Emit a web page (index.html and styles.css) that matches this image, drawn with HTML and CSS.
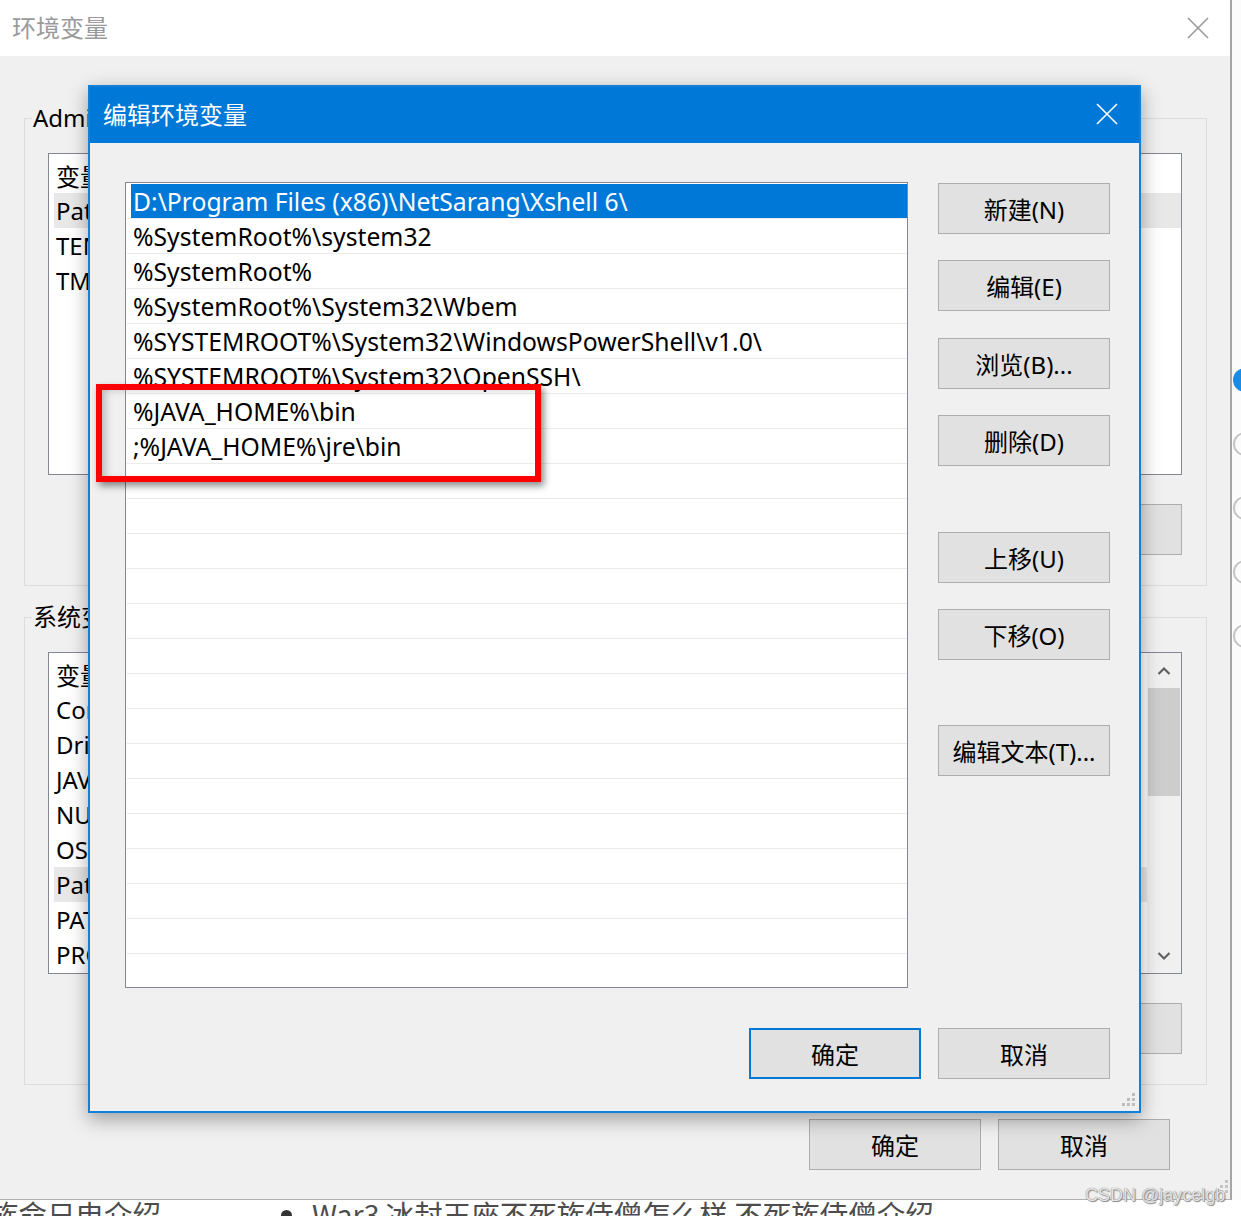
FILE: index.html
```html
<!DOCTYPE html>
<html lang="zh-CN">
<head>
<meta charset="utf-8">
<title>环境变量</title>
<link rel="stylesheet" href="styles.css">
</head>
<body>
<div class="desk">
  <div class="top">
    <div class="win">
      <div class="win-title">
        <span class="win-title-text">环境变量</span>
        <svg class="win-close" width="22" height="22" viewBox="0 0 22 22"><path d="M1 1L21 21M21 1L1 21" stroke="#9a9a9a" stroke-width="1.6" fill="none"/></svg>
      </div>
      <div class="win-body">
        <div class="group">
          <div class="group-label">Administrator 的用户变量(U)</div>
          <div class="lv">
            <div class="lv-content">
              <div class="lv-row"><span class="c1">变量</span><span class="c2">值</span></div>
              <div class="lv-row sel"><span class="c1">Path</span><span class="c2">%USERPROFILE%\AppData\Local\Microsoft\WindowsApps;</span></div>
              <div class="lv-row"><span class="c1">TEMP</span><span class="c2">%USERPROFILE%\AppData\Local\Temp</span></div>
              <div class="lv-row"><span class="c1">TMP</span><span class="c2">%USERPROFILE%\AppData\Local\Temp</span></div>
            </div>
          </div>
          <div class="btns">
            <div class="btn">新建(N)...</div>
            <div class="btn">编辑(E)...</div>
            <div class="btn">删除(D)</div>
          </div>
        </div>
        <div class="group">
          <div class="group-label">系统变量(S)</div>
          <div class="lv">
            <div class="lv-content">
              <div class="lv-row"><span class="c1">变量</span><span class="c2">值</span></div>
              <div class="lv-row"><span class="c1">ComSpec</span><span class="c2">C:\Windows\system32\cmd.exe</span></div>
              <div class="lv-row"><span class="c1">DriverData</span><span class="c2">C:\Windows\System32\Drivers\DriverData</span></div>
              <div class="lv-row"><span class="c1">JAVA_HOME</span><span class="c2">C:\Program Files\Java\jdk1.8.0_201</span></div>
              <div class="lv-row"><span class="c1">NUMBER_OF_PROCESSORS</span><span class="c2">8</span></div>
              <div class="lv-row"><span class="c1">OS</span><span class="c2">Windows_NT</span></div>
              <div class="lv-row sel"><span class="c1">Path</span><span class="c2">C:\Program Files (x86)\Common Files\Oracle\Java</span></div>
              <div class="lv-row"><span class="c1">PATHEXT</span><span class="c2">.COM;.EXE;.BAT;.CMD;.VBS;.VBE;.JS;.JSE</span></div>
              <div class="lv-row"><span class="c1">PROCESSOR_ARCHITECTURE</span><span class="c2">AMD64</span></div>
            </div>
            <div class="sb">
              <div class="sb-btn"><svg width="14" height="10" viewBox="0 0 14 10"><path d="M1.5 8L7 2.5L12.5 8" stroke="#606060" stroke-width="2.2" fill="none"/></svg></div>
              <div class="sb-thumb"></div>
              <div class="sb-track"></div>
              <div class="sb-btn"><svg width="14" height="10" viewBox="0 0 14 10"><path d="M1.5 2L7 7.5L12.5 2" stroke="#606060" stroke-width="2.2" fill="none"/></svg></div>
            </div>
          </div>
          <div class="btns">
            <div class="btn">新建(W)...</div>
            <div class="btn">编辑(I)...</div>
            <div class="btn">删除(L)</div>
          </div>
        </div>
        <div class="foot">
          <div class="btn">确定</div>
          <div class="btn">取消</div>
        </div>
      </div>
    </div>
    <div class="behind-right">
      <div class="rad on"></div>
      <div class="rad"></div>
      <div class="rad"></div>
      <div class="rad"></div>
      <div class="rad"></div>
    </div>
  </div>
  <div class="behind-bottom">
    <span class="bb1">族命日电介绍</span>
    <span class="bb-dot"></span>
    <span class="bb2">War3 冰封王座不死族侍僧怎么样 不死族侍僧介绍</span>
  </div>
</div>

<svg class="grip grip-win" width="16" height="16" viewBox="0 0 16 16"><g fill="#c4c4c4"><rect x="12" y="1" width="3" height="3"/><rect x="7" y="6" width="3" height="3"/><rect x="12" y="6" width="3" height="3"/><rect x="2" y="11" width="3" height="3"/><rect x="7" y="11" width="3" height="3"/><rect x="12" y="11" width="3" height="3"/></g></svg>

<div class="dialog">
  <div class="dlg-title">
    <span>编辑环境变量</span>
    <svg class="dlg-close" width="22" height="22" viewBox="0 0 22 22"><path d="M1 1L21 21M21 1L1 21" stroke="#ffffff" stroke-width="1.6" fill="none"/></svg>
  </div>
  <div class="dlg-body">
    <div class="dlg-main">
      <div class="plist">
        <div class="prow"><span class="sel">D:\Program Files (x86)\NetSarang\Xshell 6\</span></div>
        <div class="prow"><span>%SystemRoot%\system32</span></div>
        <div class="prow"><span>%SystemRoot%</span></div>
        <div class="prow"><span>%SystemRoot%\System32\Wbem</span></div>
        <div class="prow"><span>%SYSTEMROOT%\System32\WindowsPowerShell\v1.0\</span></div>
        <div class="prow"><span>%SYSTEMROOT%\System32\OpenSSH\</span></div>
        <div class="prow"><span>%JAVA_HOME%\bin</span></div>
        <div class="prow"><span>;%JAVA_HOME%\jre\bin</span></div>
        <div class="prow"><span></span></div>
        <div class="prow"><span></span></div>
        <div class="prow"><span></span></div>
        <div class="prow"><span></span></div>
        <div class="prow"><span></span></div>
        <div class="prow"><span></span></div>
        <div class="prow"><span></span></div>
        <div class="prow"><span></span></div>
        <div class="prow"><span></span></div>
        <div class="prow"><span></span></div>
        <div class="prow"><span></span></div>
        <div class="prow"><span></span></div>
        <div class="prow"><span></span></div>
        <div class="prow"><span></span></div>
        <div class="prow"><span></span></div>
      </div>
      <div class="pbtns">
        <div class="btn">新建(N)</div>
        <div class="btn">编辑(E)</div>
        <div class="btn">浏览(B)...</div>
        <div class="btn">删除(D)</div>
        <div class="btn">上移(U)</div>
        <div class="btn">下移(O)</div>
        <div class="btn">编辑文本(T)...</div>
      </div>
    </div>
    <div class="dlg-foot">
      <div class="btn def">确定</div>
      <div class="btn">取消</div>
    </div>
  </div>
  <svg class="grip grip-dlg" width="16" height="16" viewBox="0 0 16 16"><g fill="#bdbdbd"><rect x="12" y="1" width="3" height="3"/><rect x="7" y="6" width="3" height="3"/><rect x="12" y="6" width="3" height="3"/><rect x="2" y="11" width="3" height="3"/><rect x="7" y="11" width="3" height="3"/><rect x="12" y="11" width="3" height="3"/></g></svg>
</div>

<div class="mark"></div>
<div class="wm">CSDN @jaycelgb</div>
</body>
</html>
```

FILE: styles.css
```css
* { box-sizing: border-box; margin: 0; padding: 0; }

body {
  width: 1241px;
  height: 1216px;
  overflow: hidden;
  position: relative;
  background: #ffffff;
  font-family: "Noto Sans", "Noto Sans CJK SC", sans-serif;
  font-size: 24px;
  color: #000;
}

.desk { display: flex; flex-direction: column; height: 1216px; }
.top { display: flex; height: 1200px; }

.win {
  width: 1232px;
  height: 1200px;
  flex: none;
  border-right: 2px solid #a5a5a5;
  border-bottom: 1px solid #b0b0b0;
  background: #f0f0f0;
  display: flex;
  flex-direction: column;
}

.win-title {
  height: 56px;
  background: #ffffff;
  display: flex;
  align-items: center;
  padding: 0 21px 0 12px;
}
.win-title-text { color: #9a9a9a; line-height: 1; }
.win-close { margin-left: auto; }

.win-body { flex: 1; padding: 62px 23px 0 24px; }

.group {
  border: 1px solid #dcdcdc;
  padding: 0 24px 30px 23px;
}
.group + .group { margin-top: 31px; }

.group-label {
  width: max-content;
  height: 34px;
  line-height: 34px;
  margin: -18px 0 0 -16px;
  padding: 0 1px;
  background: #f0f0f0;
  white-space: nowrap;
}

.lv {
  height: 322px;
  margin-top: 18px;
  border: 1px solid #828790;
  background: #fff;
  display: flex;
}
.lv-content { flex: 1; padding: 4px 0 0 5px; overflow: hidden; }
.lv-row {
  height: 35px;
  display: flex;
  align-items: center;
  padding-left: 2px;
  white-space: nowrap;
}
.lv-row.sel { background: #e8e8e8; }
.c1 { width: 340px; flex: none; }
.c2 { width: 600px; flex: none; overflow: hidden; }

.sb { width: 34px; flex: none; background: #f0f0f0; display: flex; flex-direction: column; }
.sb-btn { height: 35px; display: flex; align-items: center; justify-content: center; }
.sb-thumb { height: 108px; margin: 0 1px; background: #cdcdcd; }
.sb-track { flex: 1; }

.btns { display: flex; justify-content: flex-end; gap: 17px; margin-top: 29px; }

.btn {
  width: 172px;
  height: 51px;
  flex: none;
  background: #e1e1e1;
  border: 1px solid #adadad;
  display: flex;
  align-items: center;
  justify-content: center;
  white-space: nowrap;
}
.btn.def { border: 2px solid #0078d7; }

.foot { display: flex; justify-content: flex-end; gap: 17px; margin-top: 34px; padding-right: 37px; }

.behind-right {
  flex: 1;
  background: #fbfbfb;
  overflow: hidden;
  display: flex;
  flex-direction: column;
  padding-top: 368px;
  gap: 40px;
}
.rad {
  width: 24px;
  height: 24px;
  flex: none;
  margin-left: 1px;
  border-radius: 50%;
  border: 2px solid #c6c6c6;
}
.rad.on { background: #1a8ce6; border-color: #1a8ce6; }

.behind-bottom {
  height: 16px;
  overflow: hidden;
  background: #fff;
  white-space: nowrap;
  font-family: "Noto Sans CJK SC", sans-serif;
  font-size: 28.5px;
  line-height: 28px;
  color: #4d4d4d;
  display: flex;
  align-items: flex-start;
}
.bb1 { margin-left: -10px; }
.bb-dot {
  width: 11px;
  height: 11px;
  border-radius: 50%;
  background: #333;
  margin: 10px 0 0 120px;
  flex: none;
}
.bb2 { margin-left: 20px; }

.dialog {
  position: absolute;
  left: 88px;
  top: 85px;
  width: 1053px;
  height: 1028px;
  border: 2px solid #1280d8;
  background: #f0f0f0;
  box-shadow: 0 6px 18px rgba(0, 0, 0, 0.35);
  display: flex;
  flex-direction: column;
}
.dlg-title {
  height: 56px;
  flex: none;
  background: #0078d7;
  color: #fff;
  display: flex;
  align-items: center;
  padding: 0 21px 3px 13px;
}
.dlg-close { margin-left: auto; margin-top: 1px; }

.dlg-body { flex: 1; padding: 39px 29px 32px 35px; display: flex; flex-direction: column; }
.dlg-main { display: flex; gap: 30px; height: 806px; }

.plist {
  width: 783px;
  height: 806px;
  flex: none;
  border: 1px solid #828790;
  background: #fff;
  padding: 1px 0 0 1px;
  overflow: hidden;
  font-size: 24.7px;
}
.prow {
  height: 35px;
  border-bottom: 1px solid #ebebeb;
  display: flex;
}
.prow span {
  flex: 1;
  margin-left: 4px;
  padding-left: 2px;
  display: flex;
  align-items: center;
  white-space: nowrap;
}
.prow span.sel { background: #0078d7; color: #fff; }

.pbtns { width: 172px; display: flex; flex-direction: column; padding-top: 1px; }
.pbtns .btn:nth-child(2) { margin-top: 26px; }
.pbtns .btn:nth-child(3) { margin-top: 27px; }
.pbtns .btn:nth-child(4) { margin-top: 26px; }
.pbtns .btn:nth-child(5) { margin-top: 66px; }
.pbtns .btn:nth-child(6) { margin-top: 26px; }
.pbtns .btn:nth-child(7) { margin-top: 65px; }

.dlg-foot { display: flex; justify-content: flex-end; gap: 17px; margin-top: 40px; }

.grip { position: absolute; }
.grip-win { left: 1213px; top: 1179px; }
.grip-dlg { right: 3px; bottom: 3px; }

.mark {
  position: absolute;
  left: 96px;
  top: 384px;
  width: 445px;
  height: 98px;
  border: 6px solid #ff0000;
  box-shadow: 3px 4px 7px rgba(0, 0, 0, 0.45), inset 6px 2px 8px -3px rgba(0, 0, 0, 0.25);
}

.wm {
  position: absolute;
  left: 1085px;
  top: 1185px;
  font-family: "Liberation Sans", Arial, sans-serif;
  font-size: 18px;
  color: #e4e4e4;
  text-shadow: 0 0 1px #6f6f6f, 1px 1px 1px #8a8a8a;
  white-space: nowrap;
}
```
